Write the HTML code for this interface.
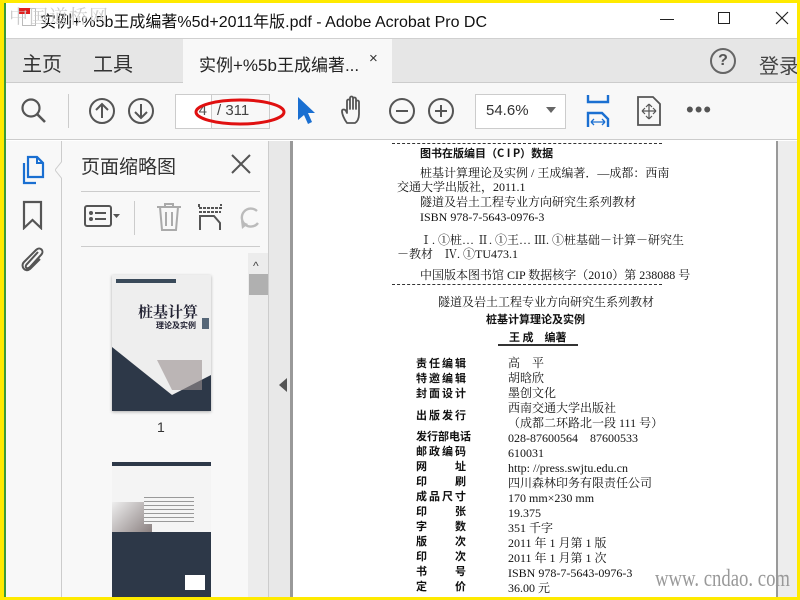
<!DOCTYPE html>
<html style="width:800px;height:600px;overflow:hidden"><head><meta charset="utf-8"><style>
*{margin:0;padding:0;box-sizing:border-box}
body{width:800px;height:600px;position:relative;overflow:hidden;background:#fff;font-family:"Liberation Sans","Noto Sans CJK SC",sans-serif}
.a{position:absolute;white-space:nowrap}
.doc{position:absolute;font-family:"Liberation Serif","Noto Serif CJK SC",serif;font-size:12px;color:#111;white-space:nowrap;line-height:14px}
.b{font-weight:bold;font-family:"Noto Sans CJK SC",sans-serif}
svg{position:absolute}
</style></head><body>
<!-- title bar -->
<div class="a" style="left:0;top:0;width:800px;height:38px;background:#fff"></div>
<div class="a" style="left:22px;top:8px;width:14px;height:18px;border:1px solid #bbb;background:#fff"></div>
<div class="a" style="left:18px;top:8px;width:12px;height:6px;background:#e02020"></div>
<div class="a" style="left:40px;top:8px;font-size:16px;color:#111">实例+%5b王成编著%5d+2011年版.pdf - Adobe Acrobat Pro DC</div>
<div class="a" style="left:9px;top:2px;font-size:19px;color:#ccc;letter-spacing:1px;font-family:'Noto Serif CJK SC',serif">中国道桥网</div>
<div class="a" style="left:660px;top:19px;width:14px;height:1px;background:#222"></div>
<div class="a" style="left:718px;top:12px;width:12px;height:12px;border:1px solid #222"></div>
<svg style="left:775px;top:11px" width="14" height="14"><path d="M1 1L13 13M13 1L1 13" stroke="#222" stroke-width="1.2"/></svg>
<!-- tab bar -->
<div class="a" style="left:0;top:38px;width:800px;height:45px;background:#e6e6e6;border-top:1px solid #d0d0d0;border-bottom:1px solid #ccc"></div>
<div class="a" style="left:183px;top:39px;width:209px;height:44px;background:#f8f8f8"></div>
<div class="a" style="left:22px;top:48px;font-size:20px;color:#333">主页</div>
<div class="a" style="left:93px;top:48px;font-size:20px;color:#333">工具</div>
<div class="a" style="left:199px;top:51px;font-size:17px;color:#222">实例+%5b王成编著...</div>
<div class="a" style="left:369px;top:50px;font-size:15px;color:#333">×</div>
<div class="a" style="left:710px;top:48px;width:26px;height:26px;border:2px solid #666;border-radius:50%;font-size:16px;color:#555;text-align:center;line-height:22px;font-weight:bold">?</div>
<div class="a" style="left:759px;top:50px;font-size:20px;color:#444">登录</div>
<!-- toolbar -->
<div class="a" style="left:0;top:83px;width:800px;height:57px;background:#f8f8f8;border-bottom:1px solid #ccc"></div>
<svg style="left:20px;top:97px" width="28" height="28"><circle cx="11" cy="11" r="8.5" fill="none" stroke="#555" stroke-width="2.2"/><path d="M17 17L25 25" stroke="#555" stroke-width="2.6"/></svg>
<div class="a" style="left:68px;top:94px;width:1px;height:34px;background:#ccc"></div>
<svg style="left:88px;top:97px" width="80" height="28"><circle cx="14" cy="14" r="12" fill="none" stroke="#555" stroke-width="2"/><path d="M14 21V7M8 13L14 7L20 13" fill="none" stroke="#555" stroke-width="2"/><circle cx="53" cy="14" r="12" fill="none" stroke="#555" stroke-width="2"/><path d="M53 7V21M47 15L53 21L59 15" fill="none" stroke="#555" stroke-width="2"/></svg>
<div class="a" style="left:175px;top:94px;width:37px;height:35px;border:1px solid #ccc;background:#fff;font-size:15px;color:#555;text-align:right;padding:7px 4px 0 0">4</div>
<div class="a" style="left:212px;top:94px;width:58px;height:35px;border:1px solid #ccc;border-left:none;background:#f8f8f8"></div>
<div class="a" style="left:217px;top:102px;font-size:15px;color:#444">/ 311</div>
<svg style="left:190px;top:92px" width="100" height="40"><ellipse cx="50" cy="20" rx="44" ry="12" fill="none" stroke="#e01010" stroke-width="3"/></svg>
<svg style="left:296px;top:96px" width="20" height="30"><path d="M2 1L2 24L8 19L12 28L16 26L12 17L19 17Z" fill="#1a6fd1"/></svg>
<svg style="left:338px;top:95px" width="32" height="32"><path d="M9 28C6 24 4 19 4 16C4 14 7 14 8 16L9 18V6C9 4 12 4 12 6V14V3C12 1 15 1 15 3V14V4C15 2 18 2 18 4V14V7C18 5 21 5 21 7V19C21 24 19 27 17 28Z" fill="none" stroke="#555" stroke-width="1.8" stroke-linejoin="round"/></svg>
<svg style="left:388px;top:97px" width="70" height="28"><circle cx="14" cy="14" r="12" fill="none" stroke="#555" stroke-width="2"/><path d="M8 14H20" stroke="#555" stroke-width="2"/><circle cx="53" cy="14" r="12" fill="none" stroke="#555" stroke-width="2"/><path d="M47 14H59M53 8V20" stroke="#555" stroke-width="2"/></svg>
<div class="a" style="left:475px;top:94px;width:91px;height:35px;border:1px solid #ccc;background:#fff"></div>
<div class="a" style="left:486px;top:102px;font-size:15px;color:#333">54.6%</div>
<svg style="left:546px;top:107px" width="10" height="6"><path d="M0 0H10L5 6Z" fill="#666"/></svg>
<svg style="left:586px;top:95px" width="26" height="32"><path d="M2 0V7H22V0M2 32V18H16L22 24V32" fill="none" stroke="#1a6fd1" stroke-width="2.4"/><path d="M5 27H19M5 27L8 24M5 27L8 30M19 27L16 24M19 27L16 30" stroke="#1a6fd1" stroke-width="1.3" fill="none"/></svg>
<svg style="left:636px;top:96px" width="26" height="30"><path d="M2 1H17L24 8V29H2Z" fill="none" stroke="#555" stroke-width="1.8"/><path d="M13 8V23M6 15H20M13 8L10 11M13 8L16 11M13 23L10 20M13 23L16 20M6 15L9 12M6 15L9 18M20 15L17 12M20 15L17 18" stroke="#555" stroke-width="1.2" fill="none"/></svg>
<div class="a" style="left:686px;top:97px;font-size:22px;color:#555;letter-spacing:1px">•••</div>
<!-- left icon column -->
<div class="a" style="left:0;top:141px;width:62px;height:459px;background:#f8f8f8;border-right:1px solid #ccc"></div>
<svg style="left:20px;top:155px" width="28" height="30"><path d="M8 2H17L23 8V22H8Z" fill="none" stroke="#1a6fd1" stroke-width="2.2"/><path d="M4 8V28H16" fill="none" stroke="#1a6fd1" stroke-width="2.2"/><path d="M17 2V8H23" fill="none" stroke="#1a6fd1" stroke-width="2"/></svg>
<svg style="left:22px;top:200px" width="22" height="30"><path d="M2 2H19V28L10.5 20L2 28Z" fill="none" stroke="#555" stroke-width="2.2"/></svg>
<svg style="left:18px;top:244px" width="28" height="30"><path d="M20 8L9 20C6 23 9 26 12 23L23 11C27 7 22 2 18 6L6 18C2 22 7 29 12 25L22 15" fill="none" stroke="#555" stroke-width="2"/></svg>
<svg style="left:55px;top:160px" width="10" height="20"><path d="M8 0L0 10L8 20" fill="#f8f8f8" stroke="#ccc"/></svg>
<!-- panel -->
<div class="a" style="left:62px;top:141px;width:206px;height:459px;background:#f8f8f8"></div>
<div class="a" style="left:81px;top:152px;font-size:19px;color:#333">页面缩略图</div>
<svg style="left:230px;top:153px" width="22" height="22"><path d="M2 2L20 20M20 2L2 20" stroke="#555" stroke-width="2"/></svg>
<div class="a" style="left:81px;top:191px;width:179px;height:1px;background:#ccc"></div>
<svg style="left:84px;top:205px" width="40" height="24"><rect x="1" y="1" width="26" height="20" rx="2" fill="none" stroke="#555" stroke-width="2"/><circle cx="7" cy="8" r="2" fill="#555"/><circle cx="7" cy="14" r="2" fill="#555"/><path d="M11 8H22M11 14H22" stroke="#555" stroke-width="2"/><path d="M29 9H36L32.5 13Z" fill="#555"/></svg>
<div class="a" style="left:134px;top:201px;width:1px;height:34px;background:#ccc"></div>
<svg style="left:155px;top:202px" width="28" height="30"><path d="M2 5H26M10 5V2H18V5M5 5L7 28H21L23 5M11 10V24M17 10V24" fill="none" stroke="#aaa" stroke-width="2"/></svg>
<svg style="left:198px;top:203px" width="24" height="28"><path d="M1 1V5H23V1M1 9H23" fill="none" stroke="#555" stroke-width="2" stroke-dasharray="3 1"/><path d="M2 27V13H16L22 20V27" fill="none" stroke="#555" stroke-width="2"/></svg>
<svg style="left:238px;top:205px" width="24" height="26"><path d="M19 6A9 9 0 1 0 20 18" fill="none" stroke="#bbb" stroke-width="2.4"/><path d="M3 16L4 24L10 19Z" fill="#bbb"/></svg>
<div class="a" style="left:81px;top:246px;width:179px;height:1px;background:#ccc"></div>
<div class="a" style="left:248px;top:253px;width:20px;height:347px;background:#ececec"></div>
<div class="a" style="left:253px;top:259px;font-size:12px;color:#444">^</div>
<div class="a" style="left:249px;top:274px;width:19px;height:21px;background:#b0b0b0"></div>
<!-- thumb 1 -->
<div class="a" style="left:112px;top:275px;width:99px;height:136px;background:#eee;box-shadow:0 1px 3px rgba(0,0,0,.3);overflow:hidden">
 <div class="a" style="left:4px;top:4px;width:60px;height:4px;background:#3a4a5a"></div>
 <div class="a" style="left:26px;top:26px;font-size:15px;font-weight:bold;color:#223;font-family:'Noto Serif CJK SC',serif">桩基计算</div>
 <div class="a" style="left:44px;top:45px;font-size:8px;font-weight:bold;color:#223">理论及实例</div>
 <div class="a" style="left:90px;top:43px;width:7px;height:11px;background:#567"></div>
 <svg class="a" style="left:0;top:0" width="99" height="136"><path d="M0 72L60 120L99 100V136H0Z" fill="#2d3848"/><path d="M45 85H90V115H60Z" fill="#998f90" opacity=".6"/></svg>
</div>
<div class="a" style="left:157px;top:419px;font-size:14px;color:#333">1</div>
<!-- thumb 2 -->
<div class="a" style="left:112px;top:462px;width:99px;height:140px;background:#2d3848">
 <div class="a" style="left:0;top:4px;width:99px;height:66px;background:#f4f4f4"></div>
 <div class="a" style="left:0;top:40px;width:40px;height:30px;background:linear-gradient(135deg,#eee,#8a8080)"></div>
 <div class="a" style="left:32px;top:32px;width:50px;height:30px;background:repeating-linear-gradient(#f4f4f4 0 3px,#999 3px 4px)"></div>
 <div class="a" style="left:73px;top:113px;width:20px;height:15px;background:#fff"></div>
</div>
<!-- divider -->
<div class="a" style="left:268px;top:141px;width:25px;height:459px;background:#e8e8e8;border-left:1px solid #ccc;border-right:3px solid #999"></div>
<svg style="left:279px;top:378px" width="8" height="14"><path d="M8 0V14L0 7Z" fill="#555"/></svg>
<!-- document page -->
<div class="a" style="left:293px;top:141px;width:483px;height:459px;background:#fff"></div>
<div class="a" style="left:776px;top:141px;width:24px;height:459px;background:#ededed;border-left:2px solid #999"></div>
<div class="a" style="left:392px;top:143px;width:270px;border-top:1px dashed #333"></div>
<div class="a" style="left:392px;top:284px;width:270px;border-top:1px dashed #333"></div>
<div class="doc b" style="left:420px;top:146px;font-size:11px">图书在版编目（C I P）数据</div>
<div class="doc" style="left:420px;top:166px">桩基计算理论及实例 / 王成编著．—成都：西南</div>
<div class="doc" style="left:397px;top:180px">交通大学出版社，2011.1</div>
<div class="doc" style="left:420px;top:195px">隧道及岩土工程专业方向研究生系列教材</div>
<div class="doc" style="left:420px;top:210px">ISBN 978-7-5643-0976-3</div>
<div class="doc" style="left:420px;top:233px">Ⅰ. ①桩… Ⅱ. ①王… Ⅲ. ①桩基础－计算－研究生</div>
<div class="doc" style="left:397px;top:247px">－教材　Ⅳ. ①TU473.1</div>
<div class="doc" style="left:420px;top:268px">中国版本图书馆 CIP 数据核字（2010）第 238088 号</div>
<div class="doc" style="left:438px;top:295px">隧道及岩土工程专业方向研究生系列教材</div>
<div class="doc b" style="left:486px;top:312px;font-size:11px">桩基计算理论及实例</div>
<div class="doc b" style="left:509px;top:330px;font-size:11px">王 成　编著</div>
<div class="a" style="left:498px;top:344px;width:80px;height:2px;background:#333"></div>
<div class="doc b" style="left:416px;top:356px;font-size:11px;line-height:15px;letter-spacing:2px">责任编辑<br>特邀编辑<br>封面设计<br><span style="line-height:28px">出版发行</span><br><span style="letter-spacing:0">发行部电话</span><br>邮政编码<br>网　　址<br>印　　刷<br>成品尺寸<br>印　　张<br>字　　数<br>版　　次<br>印　　次<br>书　　号<br>定　　价</div>
<div class="doc" style="left:508px;top:356px;line-height:15px">高　平<br>胡晗欣<br>墨创文化<br>西南交通大学出版社<br>（成都二环路北一段 111 号）<br>028-87600564　87600533<br>610031<br>http: //press.swjtu.edu.cn<br>四川森林印务有限责任公司<br>170 mm×230 mm<br>19.375<br>351 千字<br>2011 年 1 月第 1 版<br>2011 年 1 月第 1 次<br>ISBN 978-7-5643-0976-3<br>36.00 元</div>
<div class="a" style="left:655px;top:566px;font-size:24px;color:#999;font-family:'Liberation Serif',serif;transform:scaleX(0.78);transform-origin:left top">www. cndao. com</div>
<!-- frame -->
<div class="a" style="left:0;top:0;width:800px;height:3px;background:#ffea00"></div>
<div class="a" style="left:0;top:597px;width:800px;height:3px;background:#ffea00"></div>
<div class="a" style="left:0;top:0;width:4px;height:600px;background:#ffea00"></div>
<div class="a" style="left:4px;top:3px;width:2px;height:594px;background:#3a9a3a"></div>
<div class="a" style="left:797px;top:0;width:3px;height:600px;background:#ffea00"></div>
</body></html>
